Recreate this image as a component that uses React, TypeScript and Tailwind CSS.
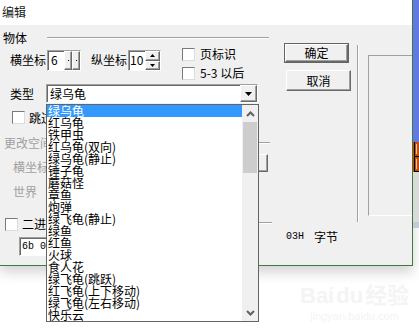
import React from "react";

const items = [
  "绿乌龟",
  "红乌龟",
  "铁甲虫",
  "红乌龟(双向)",
  "绿乌龟(静止)",
  "锤子龟",
  "蘑菇怪",
  "章鱼",
  "炮弹",
  "绿飞龟(静止)",
  "绿鱼",
  "红鱼",
  "火球",
  "食人花",
  "绿飞龟(跳跃)",
  "红飞龟(上下移动)",
  "绿飞龟(左右移动)",
  "快乐云",
];

const raised =
  "bg-[#f0f0f0] border border-t-white border-l-white border-b-[#696969] border-r-[#696969] shadow-[inset_-1px_-1px_0_#a0a0a0]";
const sunken =
  "bg-white border border-t-[#a0a0a0] border-l-[#a0a0a0] border-b-white border-r-white shadow-[inset_1px_1px_0_#696969]";

const Check = () => (
  <div className="w-[13px] h-[13px] shrink-0 bg-white border border-t-[#7a7a7a] border-l-[#7a7a7a] border-b-[#dcdcdc] border-r-[#dcdcdc]" />
);

const Chevron = ({ down }: { down?: boolean }) => (
  <svg width="9" height="6" viewBox="0 0 9 6">
    <polyline
      points={down ? "1,1 4.5,4.5 8,1" : "1,5 4.5,1.5 8,5"}
      fill="none"
      stroke="#606060"
      strokeWidth="2"
    />
  </svg>
);

const Tri = ({ down }: { down?: boolean }) => (
  <svg width="5" height="3" viewBox="0 0 5 3">
    <polygon points={down ? "0,0 5,0 2.5,3" : "0,3 5,3 2.5,0"} fill="#000" />
  </svg>
);

export default function App() {
  return (
    <div className="relative w-[419px] h-[336px] overflow-hidden bg-white text-[12px] leading-[14px] text-black font-['Noto_Sans_CJK_SC',sans-serif]">
      <div className="flex items-start">
        {/* dialog */}
        <div className="w-[413px] h-[266px] flex flex-col border-r border-b border-[#3a7d3a] shadow-[0_6px_12px_rgba(0,0,0,0.18)]">
          <div className="h-[25px] bg-white pl-[2px] pt-[5px] text-[#1a1a1a]">编辑</div>
          <div className="flex-1 bg-[#f0f0f0] flex">
            {/* left column */}
            <div className="w-[272px] flex flex-col pt-[6px]">
              <div className="h-[14px] flex items-center">
                <span className="w-[47px] pl-[3px]">物体</span>
                <div className="w-[222px] h-[2px] border-t border-[#a0a0a0] border-b border-b-white" />
              </div>

              <div className="h-[33px] flex items-start">
                <span className="ml-[10px] mt-[8px] w-[36px]">横坐标</span>
                <div className={`ml-[1px] mt-[5px] w-[34px] h-[21px] flex ${sunken}`}>
                  <span className="pl-[3px] pt-[2px] w-[16px]">6</span>
                  <div className={`w-[8px] h-full flex items-center justify-center ${raised}`}>
                    <div className="w-[1px] h-[1px] bg-black" />
                  </div>
                  <div className={`w-[8px] h-full flex items-center justify-center ${raised}`}>
                    <div className="w-[1px] h-[1px] bg-black" />
                  </div>
                </div>
                <span className="ml-[10px] mt-[8px] w-[37px]">纵坐标</span>
                <div className={`mt-[5px] w-[33px] h-[21px] flex ${sunken}`}>
                  <span className="pl-[1px] pt-[2px] w-[16px]">10</span>
                  <div className="flex-1 flex flex-col">
                    <div className={`flex-1 flex items-center justify-center ${raised}`}>
                      <Tri />
                    </div>
                    <div className={`flex-1 flex items-center justify-center ${raised}`}>
                      <Tri down />
                    </div>
                  </div>
                </div>
                <div className="ml-[21px] mt-[2px] flex flex-col gap-[5px]">
                  <div className="flex items-center gap-[5px]">
                    <Check />
                    <span>页标识</span>
                  </div>
                  <div className="flex items-center gap-[5px]">
                    <Check />
                    <span>5-3 以后</span>
                  </div>
                </div>
              </div>

              <div className="mt-[6px] h-[19px] flex items-center">
                <span className="ml-[10px] w-[36px]">类型</span>
                <div className={`w-[212px] h-[19px] flex items-center justify-between ${sunken}`}>
                  <span className="pl-[3px]">绿乌龟</span>
                  <div className={`w-[17px] h-[17px] flex items-center justify-center ${raised}`}>
                    <svg width="7" height="4" viewBox="0 0 7 4">
                      <polygon points="0,0 7,0 3.5,4" fill="#000" />
                    </svg>
                  </div>
                </div>
              </div>

              <div className="mt-[8px] h-[13px] flex items-center gap-[4px] pl-[12px]">
                <Check />
                <span>跳过</span>
              </div>

              <div className="mt-[12px] h-[14px] flex items-center text-[#a0a0a0]">
                <span className="pl-[4px]">更改空间</span>
                <div className="flex-1 mr-[2px] h-[2px] border-t border-[#a0a0a0] border-b border-b-white" />
              </div>

              <div className="mt-[4px] h-[20px] flex items-start justify-between text-[#a0a0a0]">
                <span className="ml-[13px] mt-[6px]">横坐标</span>
                <div className={`mr-[4px] w-[40px] h-[18px] ${raised}`} />
              </div>

              <div className="mt-[11px] h-[14px] pl-[13px] text-[#a0a0a0]">世界</div>

              <div className="mt-[19px] h-[13px] flex items-start">
                <div className="ml-[5px]">
                  <Check />
                </div>
                <span className="ml-[4px] -mt-[1px]">二进制</span>
                <div className="flex-1 mt-[4px] h-[2px] border-t border-[#a0a0a0] border-b border-b-white" />
              </div>

              <div className={`mt-[6px] ml-[19px] w-[220px] h-[19px] flex items-center ${sunken}`}>
                <span className="pl-[2px] font-['Liberation_Mono',monospace] text-[10px]">6b 03 00 00</span>
              </div>
            </div>

            {/* buttons column */}
            <div className="w-[85px] flex flex-col pt-[18px]">
              <div className="ml-[12px] w-[65px] h-[20px] border border-[#646464]">
                <div className={`w-full h-full flex items-center justify-center ${raised}`}>确定</div>
              </div>
              <div className={`mt-[7px] ml-[14px] w-[65px] h-[21px] flex items-center justify-center ${raised}`}>
                取消
              </div>
              <div className="mt-[139px] ml-[14px] flex items-center">
                <span className="w-[28px] font-['Liberation_Mono',monospace] text-[10px]">03H</span>
                <span>字节</span>
              </div>
            </div>

            {/* right column */}
            <div className="flex-1 flex items-start">
              <div className="mt-[20px] h-[177px] w-[2px] border-l border-[#a0a0a0] border-r border-r-white" />
              <div className="ml-[9px] mt-[30px] h-[161px] flex-1 border-t border-l border-[#a0a0a0] border-b border-b-white" />
            </div>
          </div>
        </div>

        {/* background strip */}
        <div className="w-[6px] flex flex-col">
          <div className="h-[142px] bg-[#6279e4]" />
          <svg width="6" height="30" viewBox="0 0 6 30">
            <rect width="6" height="30" fill="#c84c0c" />
            <rect x="1" y="0" width="1" height="30" fill="#000" />
            <rect x="1" y="14" width="5" height="1" fill="#000" />
            <rect x="1" y="29" width="5" height="1" fill="#000" />
            <rect x="3" y="2" width="1" height="10" fill="#f0c8a0" />
            <rect x="3" y="17" width="1" height="10" fill="#f0c8a0" />
          </svg>
          <div className="h-[50px] bg-[#dadada]" />
          <div className="h-[6px] bg-[#c3cad8]" />
        </div>
      </div>

      {/* watermark */}
      <div className="absolute left-[300px] top-[280px] flex flex-col items-center text-[#f4f4f4] pointer-events-none">
        <span className="text-[22px] leading-[26px] font-bold font-['Liberation_Sans',sans-serif]">
          Bai<span className="mx-[2px]">du</span>
          <span className="font-['Noto_Sans_CJK_SC',sans-serif]">经验</span>
        </span>
        <span className="text-[11px] leading-[14px] font-['Liberation_Sans',sans-serif]">jingyan.baidu.com</span>
      </div>

      {/* open dropdown list */}
      <div className="absolute left-[46px] top-[104px] w-[213px] h-[218px] border border-[#646464] bg-white flex">
        <div className="w-[195px] flex flex-col">
          {items.map((t, i) => (
            <div
              key={t}
              className={`h-[12px] leading-[12px] pl-[1px] whitespace-nowrap ${
                i === 0 ? "bg-[#3399ff] text-white" : "text-black"
              }`}
            >
              {t}
            </div>
          ))}
        </div>
        <div className="w-[16px] bg-[#f0f0f0] flex flex-col">
          <div className="h-[17px] flex items-center justify-center">
            <Chevron />
          </div>
          <div className="h-[51px] mx-[1px] bg-[#cdcdcd]" />
          <div className="flex-1" />
          <div className="h-[17px] flex items-center justify-center">
            <Chevron down />
          </div>
        </div>
      </div>
    </div>
  );
}
